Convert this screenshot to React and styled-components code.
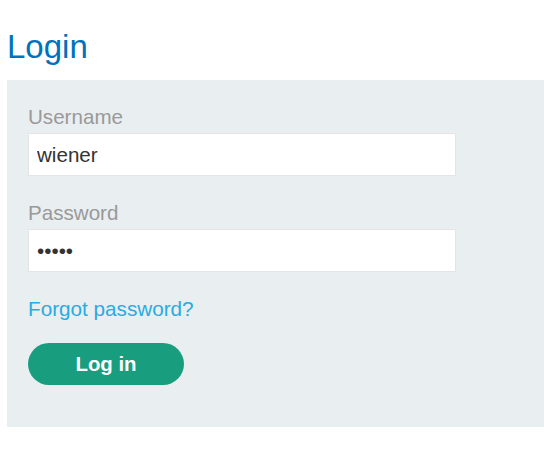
import React from "react";
import styled, { createGlobalStyle } from "styled-components";

const GlobalStyle = createGlobalStyle`
  body {
    margin: 0;
    background: #fff;
    font-family: "Liberation Sans", Arial, sans-serif;
  }
`;

const Page = styled.div`
  padding: 0 0 0 7px;
`;

const Title = styled.h1`
  margin: 0;
  padding: 27px 0 0 0;
  height: 53px;
  font-size: 33px;
  line-height: 40px;
  font-weight: normal;
  color: #0071bc;
`;

const Panel = styled.form`
  background: #e9eef1;
  padding: 25px 21px 42px 21px;
  display: flex;
  flex-direction: column;
  align-items: flex-start;
`;

const Label = styled.label`
  font-size: 20.6px;
  line-height: 23px;
  color: #999;
  margin-bottom: 5px;
`;

const Input = styled.input`
  box-sizing: border-box;
  width: 428px;
  height: 43px;
  border: 1px solid #e4e4e4;
  background: #fff;
  padding: 0 8px;
  font-family: inherit;
  font-size: 20.6px;
  color: #333;
  margin-bottom: 25px;
  outline: none;
`;

const Forgot = styled.a`
  font-size: 20.7px;
  line-height: 23px;
  color: #29abe2;
  text-decoration: none;
  margin-bottom: 23px;
`;

const Button = styled.button`
  width: 156px;
  height: 42px;
  border: none;
  border-radius: 21px;
  background: #189d7f;
  color: #fff;
  font-family: inherit;
  font-size: 20.4px;
  font-weight: bold;
`;

export default function App() {
  return (
    <Page>
      <GlobalStyle />
      <Title>Login</Title>
      <Panel onSubmit={(e) => e.preventDefault()}>
        <Label>Username</Label>
        <Input type="text" defaultValue="wiener" />
        <Label>Password</Label>
        <Input type="password" defaultValue="peter" />
        <Forgot href="#">Forgot password?</Forgot>
        <Button type="submit">Log in</Button>
      </Panel>
    </Page>
  );
}
